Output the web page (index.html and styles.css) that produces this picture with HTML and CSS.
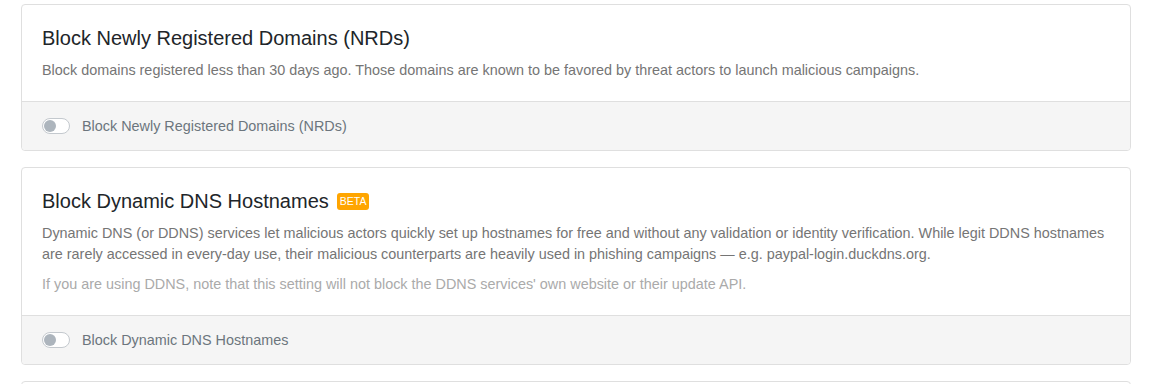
FILE: index.html
```html
<!DOCTYPE html>
<html lang="en">
<head>
    <meta charset="UTF-8">
    <meta name="viewport" content="width=device-width, initial-scale=1.0">
    <title>Security settings</title>
    <link rel="stylesheet" href="styles.css">
</head>
<body>

<div class="page">
    <div class="card">
        <div class="card-body">
            <h5 class="card-title">Block Newly Registered Domains (NRDs)</h5>
            <p class="card-text">Block domains registered less than 30 days ago. Those domains are known to be favored by threat actors to launch malicious campaigns.</p>
        </div>
        <div class="card-footer">
            <label class="switch">
                <span class="switch-track"></span>
                <span class="switch-label">Block Newly Registered Domains (NRDs)</span>
            </label>
        </div>
    </div>

    <div class="card">
        <div class="card-body">
            <h5 class="card-title">Block Dynamic DNS Hostnames <span class="badge">BETA</span></h5>
            <p class="card-text">Dynamic DNS (or DDNS) services let malicious actors quickly set up hostnames for free and without any validation or identity verification. While legit DDNS hostnames are rarely accessed in every-day use, their malicious counterparts are heavily used in phishing campaigns — e.g. paypal-login.duckdns.org.</p>
            <p class="card-text note">If you are using DDNS, note that this setting will not block the DDNS services' own website or their update API.</p>
        </div>
        <div class="card-footer">
            <label class="switch">
                <span class="switch-track"></span>
                <span class="switch-label">Block Dynamic DNS Hostnames</span>
            </label>
        </div>
    </div>

    <div class="card card-next"></div>
</div>

</body>
</html>
```

FILE: styles.css
```css
body {
    font-family: "Liberation Sans", Arial, sans-serif;
    background-color: #ffffff;
    color: #212529;
    margin: 0;
    overflow: hidden;
}
.page {
    padding: 4px 20px 0 21px;
}
.card {
    border: 1px solid #dfdfdf;
    border-radius: 4px;
    margin-bottom: 16px;
    background-color: #ffffff;
}
.card-next {
    height: 60px;
}
.card-body {
    padding: 21px 20px 20px;
}
.card-title {
    font-size: 20px;
    font-weight: 400;
    line-height: 24px;
    margin: 0 0 10px 0;
    color: #212529;
    display: flex;
    align-items: center;
}
.card-text {
    font-size: 14.4px;
    line-height: 21px;
    margin: 0;
    color: #757575;
}
.card-text + .card-text {
    margin-top: 9px;
}
.note {
    color: #aaaaaa;
}
.badge {
    display: inline-block;
    background-color: #ffa500;
    color: #ffffff;
    font-size: 10.5px;
    line-height: 17px;
    padding: 0 3px;
    border-radius: 3px;
    margin-left: 8px;
}
.card-footer {
    background-color: #f5f5f5;
    border-top: 1px solid #dfdfdf;
    padding: 13px 20px;
    border-radius: 0 0 4px 4px;
}
.switch {
    display: flex;
    align-items: center;
    height: 22px;
}
.switch-track {
    position: relative;
    width: 26px;
    height: 14px;
    border: 1px solid #c4c9ce;
    border-radius: 8px;
    background-color: #ffffff;
    margin-right: 12px;
}
.switch-track::after {
    content: "";
    position: absolute;
    top: 1px;
    left: 1px;
    width: 12px;
    height: 12px;
    border-radius: 50%;
    background-color: #adb5bd;
}
.switch-label {
    font-size: 14.4px;
    color: #6c757d;
}
```
